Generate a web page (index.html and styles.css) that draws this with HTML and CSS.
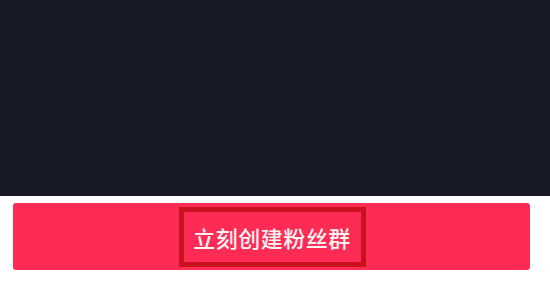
FILE: index.html
```html
<!DOCTYPE html>
<html lang="zh-CN">
<head>
<meta charset="utf-8">
<title>立刻创建粉丝群</title>
<link rel="stylesheet" href="styles.css">
</head>
<body>
<div class="video"></div>
<div class="actions">
  <button class="cta"><span class="highlight">立刻创建粉丝群</span></button>
</div>
</body>
</html>
```
FILE: styles.css
```css
html, body {
  margin: 0;
  padding: 0;
  background: #ffffff;
  width: 550px;
  height: 293px;
  overflow: hidden;
}
.video {
  height: 196px;
  background: #181a28;
}
.actions {
  padding: 7px 20px 0 13px;
}
.cta {
  display: flex;
  align-items: center;
  justify-content: center;
  width: 100%;
  height: 67px;
  margin: 0;
  padding: 0;
  border: none;
  border-radius: 3px;
  background: #fe2c55;
  cursor: pointer;
}
.highlight {
  box-sizing: border-box;
  display: flex;
  align-items: center;
  justify-content: center;
  width: 187px;
  height: 60px;
  margin-left: 1px;
  border: 5px solid #c9121f;
  color: #fdf3f4;
  font-family: "Noto Sans CJK SC", "Noto Sans", sans-serif;
  font-size: 22px;
  font-weight: 500;
  letter-spacing: 0.5px;
}
```
